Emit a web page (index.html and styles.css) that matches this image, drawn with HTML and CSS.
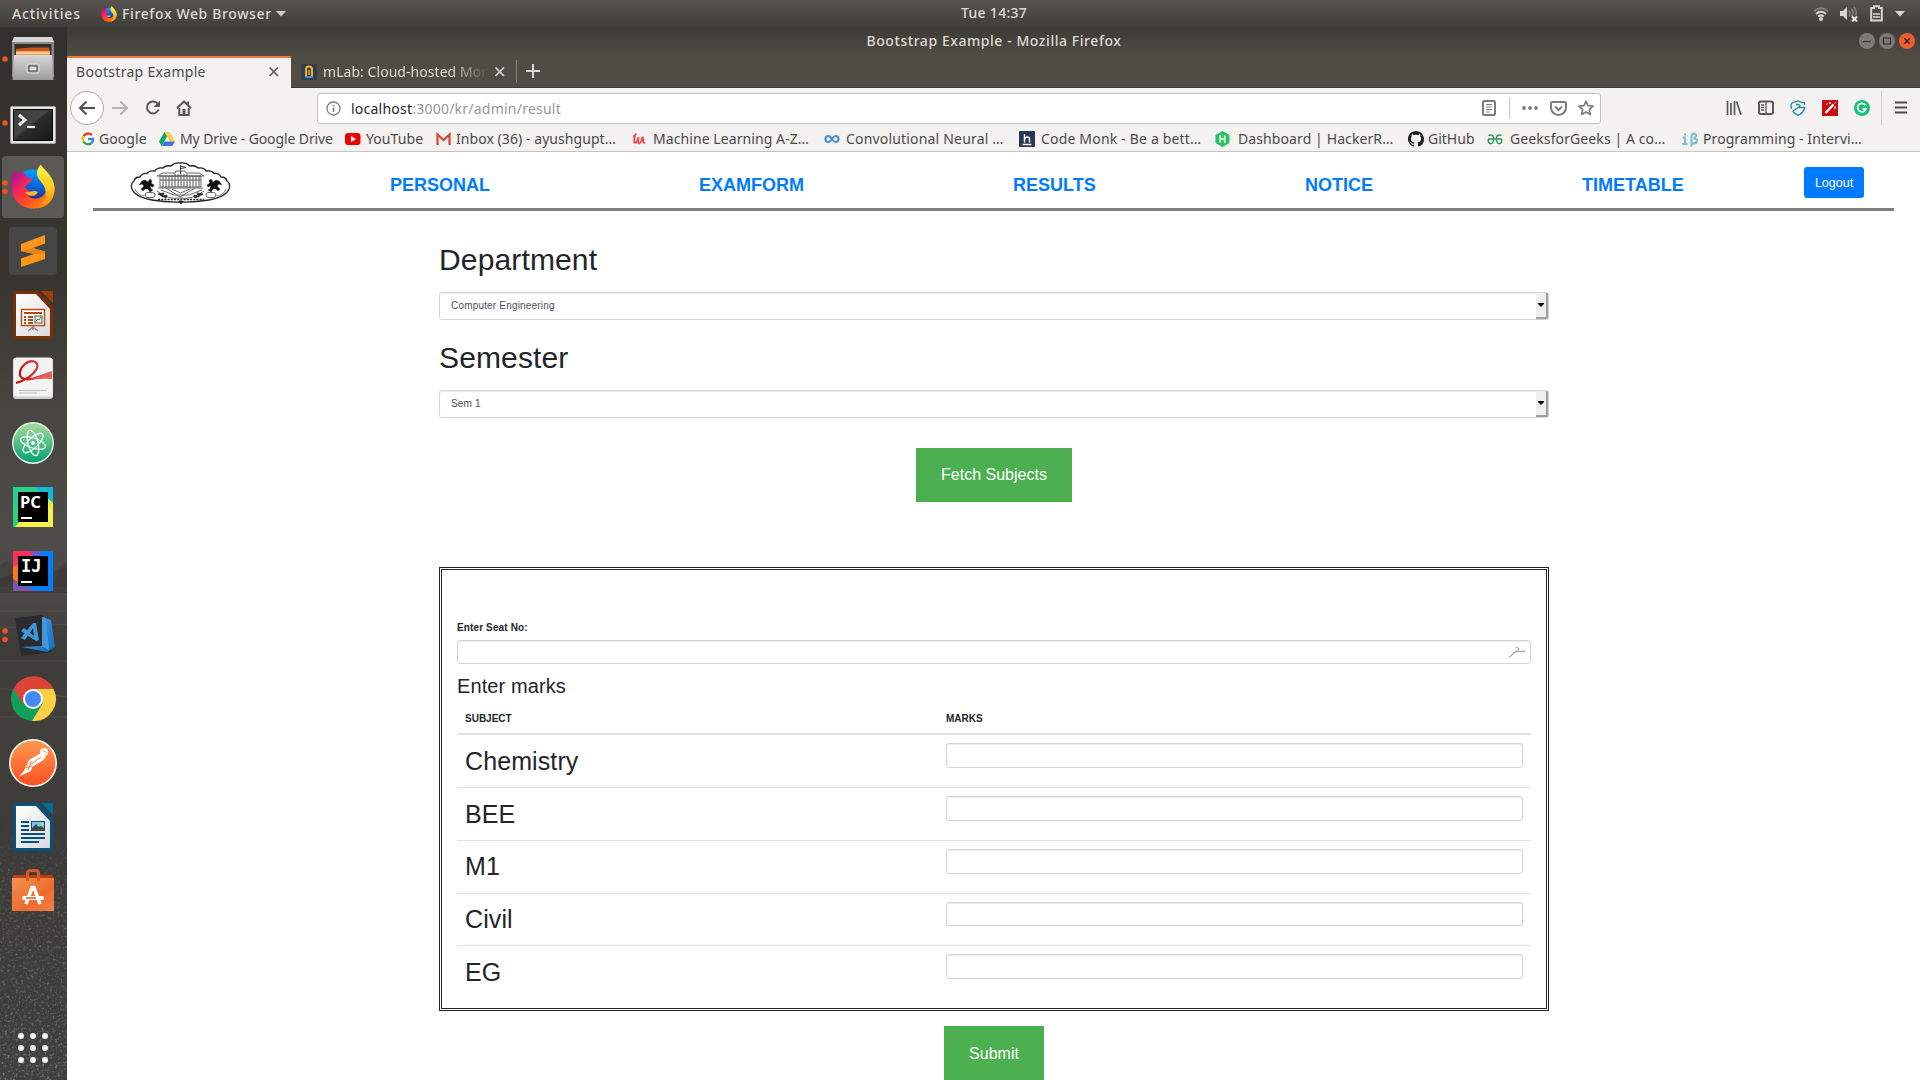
FILE: index.html
```html
<!DOCTYPE html>
<html lang="en">
<head>
<meta charset="utf-8">
<title>Bootstrap Example</title>
<link rel="stylesheet" href="styles.css">
</head>
<body>
<svg class="defs" width="0" height="0">
  <defs>
    <linearGradient id="ffRed" x1="0.1" y1="0.2" x2="0.9" y2="0.9"><stop offset="0" stop-color="#c3158e"/><stop offset=".3" stop-color="#ff2a4d"/><stop offset=".65" stop-color="#ff5a1c"/><stop offset="1" stop-color="#ff9a0c"/></linearGradient>
    <linearGradient id="ffYellow" x1="0" y1="0" x2="0" y2="1"><stop offset="0" stop-color="#fff44a"/><stop offset=".55" stop-color="#ffc51d"/><stop offset="1" stop-color="#ff8010"/></linearGradient>
    <linearGradient id="ffBlue" x1="0" y1="0" x2="0" y2="1"><stop offset="0" stop-color="#00a0ff"/><stop offset=".6" stop-color="#0558c9"/><stop offset="1" stop-color="#2b1a66"/></linearGradient>
    <symbol id="firefox" viewBox="0 0 46 46">
      <circle cx="23" cy="23" r="18" fill="url(#ffBlue)"/>
      <path d="M2 11 L5 6 L9 10 L13 8 L18 14 C20 14 22 14 23 15 L19 19 C16 21 14 22 16 25 C20 29 25 27 28 28 C26 33 20 33 17 31 C21 37 32 36 36 28 L45 22 C45 36 35 45 23 45 C9 45 0 33 1 22 C1 17 1 14 2 11 Z" fill="url(#ffRed)"/>
      <path d="M31 0 C34 6 44 11 45 23 C46 36 37 44 27 45 C35 40 38 32 35 24 C33 18 27 15 27 9 C27 5 29 2 31 0 Z" fill="url(#ffYellow)"/>
      <path d="M15 28 C19 30 23 25 28 28 C25 33 19 33 15 28 Z" fill="#ffb92e"/>
    </symbol>
    <linearGradient id="steel" x1="0" y1="0" x2="0" y2="1"><stop offset="0" stop-color="#d8d8d8"/><stop offset="1" stop-color="#9c9c9c"/></linearGradient>
    <linearGradient id="screen" x1="0" y1="0" x2="1" y2="1"><stop offset="0" stop-color="#3c3d3b"/><stop offset=".45" stop-color="#454644"/><stop offset=".5" stop-color="#2b2c2b"/><stop offset="1" stop-color="#171717"/></linearGradient>
    <linearGradient id="paper" x1="0" y1="0" x2="1" y2="1"><stop offset="0" stop-color="#fff"/><stop offset="1" stop-color="#d9d9d9"/></linearGradient>
    <linearGradient id="atomG" x1="0" y1="0" x2="0" y2="1"><stop offset="0" stop-color="#a5dc9b"/><stop offset="1" stop-color="#00a372"/></linearGradient>
    <linearGradient id="postG" x1="0" y1="0" x2="0" y2="1"><stop offset="0" stop-color="#ff9950"/><stop offset="1" stop-color="#ff4f23"/></linearGradient>
    <linearGradient id="bagG" x1="0" y1="0" x2="1" y2="1"><stop offset="0" stop-color="#ec9650"/><stop offset=".6" stop-color="#ef6a2d"/><stop offset="1" stop-color="#f0814b"/></linearGradient>
    <linearGradient id="codeG" x1="0" y1="0" x2="1" y2="1"><stop offset="0" stop-color="#54a9ec"/><stop offset="1" stop-color="#0f6cba"/></linearGradient>
    <linearGradient id="swirl" x1="0" y1="0" x2="1" y2="0"><stop offset="0" stop-color="#c80000"/><stop offset="1" stop-color="#e66a6a"/></linearGradient>
    <filter id="grain" x="0" y="0" width="100%" height="100%"><feTurbulence type="fractalNoise" baseFrequency=".38" numOctaves="2" seed="4"/><feColorMatrix values="0 0 0 0 .62  0 0 0 0 .62  0 0 0 0 .60  1.5 1.5 0 0 -1.55"/></filter>
    <linearGradient id="fadeIn" x1="0" y1="0" x2="0" y2="1"><stop offset="0" stop-color="#000"/><stop offset=".3" stop-color="#555"/><stop offset="1" stop-color="#999"/></linearGradient>
    <mask id="grainMask"><rect width="67" height="260" fill="url(#fadeIn)"/></mask>
  </defs>
</svg>

<header class="topbar">
  <span class="activities">Activities</span>
  <svg class="app-icon" width="16" height="20" viewBox="0 0 16 20"><use href="#firefox" x="0" y="2" width="16" height="16"/></svg>
  <span class="app-name">Firefox Web Browser</span>
  <svg class="app-arrow" width="10" height="6"><path d="M0 0H10L5 5.5Z" fill="#cfcdc8"/></svg>
  <span class="clock">Tue 14:37</span>
  <div class="tray">
    <svg width="16" height="16" viewBox="0 0 16 16" fill="none" stroke="#d8d6d2" stroke-width="2"><path d="M1 5.2Q8-.8 15 5.2" stroke="#85827b"/><path d="M3 8Q8 3.6 13 8"/><path d="M5.2 10.6Q8 8.2 10.800 10.600"/><circle cx="8" cy="13" r="1" /></svg>
    <svg width="18" height="16" viewBox="0 0 18 16"><path d="M0 5H3L7 1V14L3 10H0Z" fill="#d8d6d2"/><path d="M9 4.500Q11 7.500 9 10.500M11.500 2.500Q14.500 7 11.500 10.500M14 1Q17.500 5 15.500 9.500" fill="none" stroke="#85827b" stroke-width="1.500"/><path d="M12 10.500L17 15.500M17 10.500L12 15.500" stroke="#e8e6e2" stroke-width="2"/></svg>
    <svg width="13" height="17" viewBox="0 0 13 17"><path d="M1.200 3H4V1.200H9V3H11.800V15.600H1.200Z" fill="none" stroke="#d8d6d2" stroke-width="2"/><path d="M3 9H10M3 12H10" stroke="#d8d6d2" stroke-width="1.600"/></svg>
    <svg width="10" height="6"><path d="M0 0H10L5 5.500Z" fill="#d8d6d2"/></svg>
  </div>
</header>

<div class="desktop">
  <aside class="dock">
    <svg class="wallpaper" width="67" height="1053" viewBox="0 0 67 1053">
      <path d="M0 552Q12 546 22 548T45 553L55 544L67 540V566H0Z" fill="#35342f" opacity=".45"/>
      <path d="M0 540Q6 530 14 538Q22 546 20 560H0ZM60 540Q67 533 67 536V560H54Z" fill="#33322d" opacity=".3"/>
      <path d="M0 584H67M0 601L67 597M0 634H67M0 661L67 670M0 690H67" stroke="#5a5955" stroke-width="1" opacity=".5"/>
      <g transform="translate(0 793)" mask="url(#grainMask)"><rect width="67" height="260" filter="url(#grain)"/></g>
    </svg>
    <ul class="dock-list">
      <li><svg viewBox="0 0 66 64"><circle cx="5" cy="32" r="2.800" fill="#e95420"/><path d="M14 10H52L54 15V50H12V15Z" fill="#8b8b8b"/><path d="M14 10H52L54 15H12Z" fill="#d6d6d6"/><rect x="14.500" y="17" width="37" height="14" fill="#332d29"/><path d="M16 22L30 20.500H49L50 24H16Z" fill="#c8561e"/><path d="M16 24H50V28H16Z" fill="#eba252"/><path d="M16 26H50" stroke="#fff4df"/><path d="M14 28H52L53.500 53H12.500Z" fill="url(#steel)"/><rect x="27" y="37" width="12" height="9" rx="2" fill="#a6a6a6" stroke="#dcdcdc" stroke-width="1.200"/><rect x="29" y="39" width="8" height="5" fill="#ddd" stroke="#444"/></svg></li>
      <li><svg viewBox="0 0 66 64"><circle cx="5" cy="32" r="2.800" fill="#e95420"/><rect x="10.500" y="15.500" width="45" height="37" rx="1" fill="#e4e4e2" stroke="#a3a3a0"/><rect x="13.500" y="18.500" width="39" height="31" fill="url(#screen)" stroke="#080808"/><path d="M19 24L25 29L19 34" fill="none" stroke="#f4f4f4" stroke-width="3"/><path d="M27 36H35" stroke="#f4f4f4" stroke-width="2.200"/></svg></li>
      <li><svg viewBox="0 0 66 64"><rect x="2" y="1" width="62" height="62" rx="4" fill="#5b5955"/><circle cx="5" cy="28" r="2.800" fill="#e95420"/><circle cx="5" cy="36.500" r="2.800" fill="#e95420"/><use href="#firefox" x="10.500" y="9" width="45" height="46"/></svg></li>
      <li><svg viewBox="0 0 66 64"><rect x="9" y="8" width="48" height="48" rx="4" fill="#464646"/><path d="M21 25L45 16V24.500L33 29L45 32.500V40L21 48V39.500L34 35L21 32Z" fill="#ff9519"/><path d="M33 29L45 32.500V34.500L34 35L21 32Z" fill="#e5861a"/></svg></li>
      <li><svg viewBox="0 0 66 64"><path d="M15 8H38L53 24V53Q53 56 50 56H16Q13 56 13 53V10Q13 8 15 8Z" fill="#7c2d04"/><path d="M41 8H53V20Z" fill="#a33e03"/><path d="M16 11H36L50 26V53H16Z" fill="url(#paper)"/><path d="M33 43V47M28 48L33 44L38 48" stroke="#888" stroke-width="1.500" fill="none"/><rect x="21.500" y="26.500" width="23" height="16" fill="#fff" stroke="#b54b16" stroke-width="1.500"/><path d="M24 30H42M24 34H26M28 34H33M24 37H26M28 37H33M24 40H26M28 40H33" stroke="#b54b16" stroke-width="1.800"/><rect x="35" y="33" width="7" height="7" fill="#eee" stroke="#555"/><path d="M36 38L38 36L39 37L41 34" stroke="#1f9c3a" fill="none"/></svg></li>
      <li><svg viewBox="0 0 66 64"><rect x="13" y="11" width="40" height="41" rx="3" fill="#cfcfcf"/><rect x="13.500" y="10.500" width="39" height="39" rx="3" fill="#f3f3f3"/><path d="M16 36C24 34 34 28 37 21C39 14 31 12 25 17C20 21 18 28 22 31C28 35 41 29 52 25" fill="none" stroke="url(#swirl)" stroke-width="2.200"/><path d="M34 31Q44 29 52 25V32Q44 31 30 33Z" fill="#e46060"/><path d="M19 43.500H47M19 46H37" stroke="#bdbdbd" stroke-width="1"/></svg></li>
      <li><svg viewBox="0 0 66 64"><circle cx="33" cy="32" r="21" fill="#eee"/><circle cx="33" cy="32" r="19.600" fill="url(#atomG)"/><g fill="none" stroke="#f0faf4" stroke-width="1.300"><ellipse cx="33" cy="32" rx="13" ry="5" transform="rotate(18 33 32)"/><ellipse cx="33" cy="32" rx="13" ry="5" transform="rotate(76 33 32)"/><ellipse cx="33" cy="32" rx="13" ry="5" transform="rotate(136 33 32)"/></g><circle cx="33" cy="32" r="2" fill="#fff"/></svg></li>
      <li><svg viewBox="0 0 66 64"><rect x="13" y="12" width="40" height="40" fill="#29cf8b"/><path d="M35 12H53V30Z" fill="#11b9d8"/><path d="M53 28V52H15L44 20Z" fill="#f8f246"/><path d="M13 28V52L24 40Z" fill="#2bd27c"/><path d="M44 12L53 38L46 20Z" fill="#8be34f"/><rect x="18" y="17" width="30" height="30" fill="#000"/><text x="20" y="33" class="ide">PC</text><path d="M21 43H32" stroke="#fff" stroke-width="2"/></svg></li>
      <li><svg viewBox="0 0 66 64"><rect x="13" y="12" width="40" height="40" fill="#087cfa"/><path d="M13 12H32L40 24L13 32Z" fill="#fe315d"/><path d="M13 28L22 24V44L15 52H13Z" fill="#f97a12"/><path d="M13 40L20 44L36 52H13Z" fill="#7a58b0"/><path d="M30 12H42L35 20Z" fill="#6c5bc8"/><rect x="18" y="17" width="30" height="30" fill="#000"/><text x="21" y="33" class="ide mono">IJ</text><path d="M21 43H32" stroke="#fff" stroke-width="2"/></svg></li>
      <li><svg viewBox="0 0 66 64"><circle cx="5" cy="28" r="2.800" fill="#e95420"/><circle cx="5" cy="36.500" r="2.800" fill="#e95420"/><path d="M15 15L43 12L52 49L21 53Z" fill="#2b2b2e"/><path d="M42 14L51 17L55 44L47 49L22 44L42 43Z" fill="url(#codeG)"/><path d="M42 14L46 15L49 47L42 43Z" fill="#3f97dd"/><path d="M36 20L39 37L36 38L21 28L24 25L34 33L33 25L25 37L21 35L33 20Z" fill="#3a98e2"/></svg></li>
      <li><svg viewBox="0 0 66 64"><circle cx="33" cy="32" r="22" fill="#119f5a"/><path d="M13.500 22A22 22 0 0 1 53.500 22H33L23 36Z" fill="#dc4437"/><path d="M33 22H53.500A22 22 0 0 1 32 54L43 36Z" fill="#ffcf45"/><path d="M13.500 22L24 38L24 28Z" fill="#dc4437"/><circle cx="33" cy="32" r="10" fill="#fff"/><circle cx="33" cy="32" r="8" fill="#4588f4"/></svg></li>
      <li><svg viewBox="0 0 66 64"><circle cx="33" cy="32" r="24" fill="#fff"/><circle cx="33" cy="32" r="22.500" fill="url(#postG)"/><circle cx="44" cy="21" r="4" fill="#fff"/><path d="M41 22L29 29L24 40L19 45.500L31 40L32 36L42 30L46 26Z" fill="#fff"/><path d="M31 30L28 39M41 26L30 34M26 37L32 35" stroke="#ff7a3c" stroke-width="1"/><path d="M42 19L47 22" stroke="#ff7a3c" stroke-width=".8"/></svg></li>
      <li><svg viewBox="0 0 66 64"><path d="M15 8H38L53 24V53Q53 56 50 56H16Q13 56 13 53V10Q13 8 15 8Z" fill="#04507f"/><path d="M41 8H53V20Z" fill="#0369a3"/><path d="M16 11H36L50 26V53H16Z" fill="url(#paper)"/><path d="M21 27H29M21 31H29M21 35H29M21 39H45M21 43H45M21 47H39" stroke="#04507f" stroke-width="2"/><rect x="31.500" y="26.500" width="13" height="9" fill="#7fc4ef" stroke="#04507f"/><path d="M32 36V33L36 29L39 32L41 31L44 33V36Z" fill="#3b4a45"/><circle cx="42" cy="29" r="1.300" fill="#f5cf3b"/></svg></li>
      <li><svg viewBox="0 -2 66 64"><path d="M14 14H52L54 18H12Z" fill="#b8400f"/><path d="M12 17H54V50H12Z" fill="url(#bagG)"/><path d="M27.500 20V12Q27.500 9.500 31 9.500H35Q38.500 9.500 38.500 12V20" fill="none" stroke="#d9582a" stroke-width="3"/><path d="M26 43L32 26.500H34L40 43" fill="none" stroke="#fff" stroke-width="3.600"/><path d="M24 37H42" stroke="#fff" stroke-width="4" stroke-linecap="round"/><path d="M26 37H36" stroke="#e5622a" stroke-width="1.600"/></svg></li>
    </ul>
    <svg class="apps-grid" width="32" height="32" fill="#f2f1ef"><circle cx="4" cy="4" r="3"/><circle cx="16" cy="4" r="3"/><circle cx="28" cy="4" r="3"/><circle cx="4" cy="16" r="3"/><circle cx="16" cy="16" r="3"/><circle cx="28" cy="16" r="3"/><circle cx="4" cy="28" r="3"/><circle cx="16" cy="28" r="3"/><circle cx="28" cy="28" r="3"/></svg>
  </aside>

  <section class="window">
    <div class="titlebar">
      <span class="window-title">Bootstrap Example - Mozilla Firefox</span>
      <div class="controls">
        <svg width="16" height="16"><circle cx="8" cy="8" r="8" fill="#7d7b75"/><path d="M4 8.500H12" stroke="#35342f" stroke-width="1.200"/></svg>
        <svg width="16" height="16"><circle cx="8" cy="8" r="8" fill="#7d7b75"/><rect x="4.500" y="5" width="7" height="6" fill="none" stroke="#35342f" stroke-width="1.200"/></svg>
        <svg width="16" height="16"><circle cx="8" cy="8" r="8" fill="#ea5f33"/><path d="M5.200 5.200L10.800 10.800M10.800 5.200L5.200 10.800" stroke="#49211a" stroke-width="1.400"/></svg>
      </div>
    </div>

    <div class="tabs">
      <div class="tab active"><span>Bootstrap Example</span><svg width="12" height="12"><path d="M1.500 1.500L10 10M10 1.500L1.500 10" stroke="#5c5c5a" stroke-width="1.700"/></svg></div>
      <div class="tab">
        <svg width="16" height="16"><rect width="16" height="16" fill="#313f4c"/><path d="M5 12V5.500Q5 2.500 8 2.500Q11 2.500 11 5.500V12" fill="none" stroke="#f6b12c" stroke-width="2"/><path d="M8 6V11" stroke="#f6b12c" stroke-width="1.500"/><path d="M4 12H12V14H4Z" fill="#4a90c9"/></svg>
        <span class="faded">mLab: Cloud-hosted Mon</span>
        <svg width="12" height="12"><path d="M1.500 1.500L10 10M10 1.500L1.500 10" stroke="#dad8d3" stroke-width="1.700"/></svg>
      </div>
      <svg class="new-tab" width="14" height="14"><path d="M7 0V14M0 7H14" stroke="#dad8d3" stroke-width="2"/></svg>
    </div>

    <div class="toolbar">
      <div class="back"><svg width="18" height="16" fill="none" stroke="#4d4d4c" stroke-width="2"><path d="M17 8H2M8.500 1.500L2 8L8.500 14.500"/></svg></div>
      <svg class="forward" width="18" height="16" fill="none" stroke="#b5b4b2" stroke-width="2"><path d="M1 8H16M9.500 1.500L16 8L9.500 14.500"/></svg>
      <svg class="reload" width="16" height="16"><path d="M12.700 3.800A6 6 0 1 0 13.600 9.500" fill="none" stroke="#59595a" stroke-width="2"/><path d="M15 .5V7H8.500Z" fill="#59595a"/></svg>
      <svg class="home" width="16" height="16"><path d="M1 8.300L8 1.500L15 8.300" fill="none" stroke="#59595a" stroke-width="2"/><path d="M3.300 8V15H12.700V8" fill="none" stroke="#59595a" stroke-width="2"/><path d="M6.500 9H9.500V14H6.500Z" fill="#59595a"/><path d="M11 1.500H13V6H11Z" fill="#59595a"/></svg>
      <div class="urlbar">
        <svg width="15" height="15" fill="none" stroke="#7c7c7c" stroke-width="1.300"><circle cx="7.500" cy="7.500" r="6.500"/><path d="M7.500 6.500V11M7.500 3.700V5.200" stroke-width="1.600"/></svg>
        <span class="url">localhost<i>:3000/kr/admin/result</i></span>
        <svg class="reader" width="14" height="16" fill="none" stroke="#7c7c7c"><rect x="1" y="1" width="12" height="14" rx="1.500" stroke-width="2"/><path d="M4 4.500H10M4 7H10M4 9.500H10M4 12H7.500" stroke-width="1.200"/></svg>
        <span class="rule"></span>
        <svg class="more" width="16" height="4" fill="#7c7c7c"><circle cx="2" cy="2" r="1.900"/><circle cx="8" cy="2" r="1.900"/><circle cx="14" cy="2" r="1.900"/></svg>
        <svg class="pocket" width="17" height="15" fill="none" stroke="#7c7c7c" stroke-width="2"><path d="M1 2.500Q1 1 2.500 1H14.500Q16 1 16 2.500V6.500A7.500 7.500 0 0 1 1 6.500Z"/><path d="M5 5.500L8.500 9L12 5.500"/></svg>
        <svg width="16" height="16" fill="none" stroke="#7c7c7c" stroke-width="1.700" stroke-linejoin="round"><path d="M8 1.200L10 5.700L15 6.200L11.300 9.600L12.400 14.600L8 12L3.600 14.600L4.700 9.600L1 6.200L6 5.700Z"/></svg>
      </div>
      <div class="tools">
        <svg width="16" height="16" stroke="#59595a" stroke-width="1.700"><path d="M1.500 1V15M5 3V15M8.500 1V15M10.500 1.500L15 14.700"/></svg>
        <svg width="16" height="16" fill="none" stroke="#59595a"><rect x="1" y="1.500" width="14" height="12.500" rx="2" stroke-width="2"/><path d="M8 2V14M3 5H6M3 7.500H6M3 10H6" stroke-width="1.300"/></svg>
        <svg width="16" height="16" fill="none" stroke="#2f8fa8" stroke-width="1.400"><path d="M1.500 9C.5 4 1.500 2.800 3 2.500Q6 2 8 .8Q11 2.800 14.500 2.800V5M14.500 8Q13.500 13 8 15.300Q4.500 13.500 3 11.500"/><path d="M2.500 11.500L8 7.500H15.500M6 4.500H9Q11.500 6 8 7.500"/></svg>
        <svg width="16" height="16"><rect width="16" height="16" fill="#cd0a10"/><path d="M3.500 13L11.500 4.500" stroke="#fff" stroke-width="2.400"/><path d="M8 2V4M7 3H9M13 6.500V9M12 7.800H14M12.500 3.500L13.800 2.200M4.500 4.500L6 3.500" stroke="#fff" stroke-width="1"/></svg>
        <svg width="16" height="16"><circle cx="8" cy="8" r="8" fill="#15c378"/><path d="M11.500 5.300A4.300 4.300 0 1 0 12 8.800H8.600" fill="none" stroke="#fff" stroke-width="1.700"/></svg>
      </div>
      <svg class="menu" width="12" height="13" stroke="#4d4d4c" stroke-width="2"><path d="M0 1.500H12M0 6.500H12M0 11.500H12"/></svg>
    </div>

    <nav class="bookmarks">
      <a><svg width="16" height="16" viewBox="0 0 16 16"><circle cx="8" cy="8" r="8" fill="#fff"/><g fill="none" stroke-width="2.600"><path d="M12 4.200A5.300 5.300 0 0 0 3.600 5.200" stroke="#ea4335"/><path d="M3.500 5.300A5.300 5.300 0 0 0 3.500 10.700" stroke="#fbbc05"/><path d="M3.500 10.600A5.300 5.300 0 0 0 11.500 12" stroke="#34a853"/><path d="M11.400 12.100Q13.300 10.500 13.200 8H8" stroke="#4285f4"/></g></svg>Google</a>
      <a class="drive"><svg width="16" height="16" viewBox="0 0 16 16"><path d="M5.500 1H10.500L16 10.500H11Z" fill="#ffcf48"/><path d="M5.500 1L8 5.500L2.700 15L0 10.500Z" fill="#11a861"/><path d="M5.500 10.500H16L13.300 15H2.700Z" fill="#3777e3"/></svg>My Drive - Google Drive</a>
      <a><svg width="16" height="16" viewBox="0 0 16 16"><rect y="2" width="15.500" height="12" rx="3" fill="#f00000"/><path d="M6 5V11L11 8Z" fill="#fff"/></svg>YouTube</a>
      <a class="mail"><svg width="16" height="16" viewBox="0 0 16 16"><rect x="1" y="2.500" width="13" height="11.500" fill="#f1efee"/><path d="M1.500 14V3.500L7.500 9L13.500 3.500V14" fill="none" stroke="#d54b3d" stroke-width="2.300"/></svg>Inbox (36) - ayushgupt…</a>
      <a class="udemy"><svg width="16" height="16" viewBox="0 0 16 16"><path d="M1 5.500Q3.500 5 3.700 2.500Q1.500 9.500 2.500 11.500Q4.500 13 6.500 6.500" fill="none" stroke="#eb5252" stroke-width="2"/><path d="M6.500 6.500Q5.500 11.500 7 12.500Q8.500 12.500 10 7.500Q11.500 5 11.200 8Q10.500 12.500 13 11.500" fill="none" stroke="#eb5252" stroke-width="2"/></svg>Machine Learning A-Z…</a>
      <a class="loose"><svg width="16" height="16" viewBox="0 0 16 16"><path d="M8 8C6.500 10.500 5.700 11 4.500 11A3 3 0 0 1 4.500 5C7.500 5 8.500 11 11.500 11A3 3 0 0 0 11.500 5C10.300 5 9.500 5.500 8 8" fill="none" stroke="#4b8fc9" stroke-width="2.200"/></svg>Convolutional Neural …</a>
      <a class="loose"><svg width="16" height="16" viewBox="0 0 16 16"><rect width="16" height="16" rx="1" fill="#2c3454"/><path d="M5.500 3V11.500M5.500 7.500Q10.500 4.500 10.500 8V11.500M3.500 13.500H12.500" fill="none" stroke="#fff" stroke-width="1.500"/></svg>Code Monk - Be a bett…</a>
      <a class="wide"><svg width="16" height="16" viewBox="0 0 16 16"><path d="M7.500 0L14.500 4V12L7.500 16L.5 12V4Z" fill="#26c360"/><path d="M5.300 4V11.500M9.700 4.500V12M5.300 8H9.700" stroke="#fff" stroke-width="1.600"/></svg>Dashboard | HackerR…</a>
      <a class="github"><svg width="16" height="16" viewBox="0 0 16 16"><path fill="#1b1f23" d="M8 0C3.580 0 0 3.580 0 8c0 3.540 2.290 6.530 5.470 7.590.4.070.55-.17.55-.38 0-.19-.01-.82-.01-1.490-2.010.37-2.530-.49-2.690-.94-.09-.23-.48-.94-.82-1.130-.28-.15-.68-.52-.01-.53.63-.01 1.080.58 1.230.82.72 1.210 1.870.87 2.330.66.070-.52.280-.87.510-1.070-1.780-.2-3.640-.89-3.640-3.950 0-.87.310-1.590.82-2.150-.08-.2-.36-1.020.08-2.120 0 0 .67-.21 2.200.82.640-.18 1.320-.27 2-.27s1.360.09 2 .27c1.530-1.040 2.200-.82 2.200-.82.440 1.100.160 1.920.080 2.120.510.560.820 1.270.820 2.150 0 3.070-1.870 3.750-3.650 3.950.290.250.540.730.540 1.480 0 1.070-.01 1.930-.01 2.200 0 .210.150.460.550.380A8.010 8.010 0 0 0 16 8c0-4.420-3.580-8-8-8z"/></svg>GitHub</a>
      <a class="geeks"><svg width="16" height="16" viewBox="0 0 16 16"><path d="M1.500 4.500Q6.500 2.500 6.800 8Q6.500 13 3 12.500Q.5 11.500 1.500 8H14.500Q15.500 11.500 13 12.500Q9.500 13 9.200 8Q9.500 2.500 14.500 4.500" fill="none" stroke="#34975b" stroke-width="1.400"/></svg>GeeksforGeeks | A co…</a>
      <a><svg width="16" height="16" viewBox="0 0 16 16"><path d="M.5 6.500H3V12.500M.3 13H5.500M2 3.500H4" fill="none" stroke="#79bfd4" stroke-width="1.900"/><path d="M9.500 15.500V5Q9.500 2.500 12 2.500Q14.500 2.800 14 5Q13.500 7 11.500 7.200Q15 7.500 15 10Q14.500 13 9.500 12.500" fill="none" stroke="#79bfd4" stroke-width="2"/></svg>Programming - Intervi…</a>
    </nav>

    <main class="page">
      <header class="site-header">
        <svg class="logo" width="101" height="42" viewBox="0 0 101 42" fill="none" stroke="#222" stroke-width=".9">
          <path d="M2 27Q0 22 4 19Q5 15 10 15Q12 11 17 11.500Q19 8 25 9Q27 5 33 6Q36 3 41 4Q45 0 50.500 1Q56 0 60 4Q65 3 68 6Q74 5 76 9Q82 8 84 11.500Q89 11 91 15Q96 15 97 19Q101 22 99 27Q96 35 79 38Q64 40.500 50.500 40Q37 40.500 22 38Q5 35 2 27Z" stroke-width="1.300"/>
          <path d="M50.500 12V3M50.500 4L56 5.500L50.500 6.500" />
          <path d="M30 14H71V25H30ZM27 14L33 11H45L46 9H55L56 11H69L74 14Z" stroke="#555"/>
          <path d="M33 14V25M36 14V25M39 14V25M42 14V25M45 12V25M48 12V25M51 12V25M54 12V25M57 12V25M60 14V25M63 14V25M66 14V25M69 14V25" stroke="#444"/>
          <path d="M30 18H71M28 26H73M31 28L44 33H59L72 28M36 26L50 35L65 26M42 27L50.500 31L60 27M27 29Q38 38 50 36Q62 38 74 29" stroke="#555"/>
          <path d="M12 19L15 18L18 20L20 17L22 19L21 21L24 23L23 25L20 24L21 27L23 28L20 30L18 27L15 27L13 29L11 27L14 24L12 22L9 23ZM89 19L86 18L83 20L81 17L79 19L80 21L77 23L78 25L81 24L80 27L78 28L81 30L83 27L86 27L88 29L90 27L87 24L89 22L92 23Z" fill="#111" stroke-width=".4"/>
          <ellipse cx="20" cy="33" rx="5" ry="2.700" stroke="#444"/><ellipse cx="81" cy="33" rx="5" ry="2.700" stroke="#444"/>
          <path d="M28 32L34 31L32 35L37 33L36 36ZM73 32L67 31L69 35L64 33L65 36Z" fill="#333"/>
          <path d="M28 37.500H74" stroke-width="1.300" stroke-dasharray="2 1.200"/><path d="M49 39H52.500L51 42Z" fill="#111"/>
          <path d="M5 27Q8 34 14 34M96 27Q93 34 87 34" stroke="#666"/>
        </svg>
        <a>PERSONAL</a><a>EXAMFORM</a><a>RESULTS</a><a>NOTICE</a><a>TIMETABLE</a>
        <button class="logout">Logout</button>
      </header>

      <div class="content">
        <h2>Department</h2>
        <div class="select"><span>Computer Engineering</span><b class="drop"><svg width="6" height="4"><path d="M0 0H6V1L3 4L0 1Z"/></svg></b></div>
        <h2>Semester</h2>
        <div class="select"><span>Sem 1</span><b class="drop"><svg width="6" height="4"><path d="M0 0H6V1L3 4L0 1Z"/></svg></b></div>
        <button class="green fetch">Fetch Subjects</button>

        <form class="marks">
          <label>Enter Seat No:</label>
          <div class="input seat"><svg width="18" height="12" fill="none" stroke="#b4b4b4" stroke-width="1.300"><path d="M1 11.500L6 7Q9 4 11 5.500M4 7.500Q9 4.500 17.500 5.500M7.500 1L11 2.500L9.500 5.500"/></svg></div>
          <h4>Enter marks</h4>
          <div class="row head"><span>SUBJECT</span><span>MARKS</span></div>
          <div class="row first"><span class="name">Chemistry</span><div class="input"></div></div>
          <div class="row"><span class="name">BEE</span><div class="input"></div></div>
          <div class="row"><span class="name">M1</span><div class="input"></div></div>
          <div class="row"><span class="name">Civil</span><div class="input"></div></div>
          <div class="row"><span class="name">EG</span><div class="input"></div></div>
        </form>
        <button class="green submit">Submit</button>
      </div>
    </main>
  </section>
</div>
</body>
</html>
```
FILE: styles.css
```css
* { box-sizing: border-box; }
body {
  margin: 0;
  width: 1920px;
  height: 1080px;
  overflow: hidden;
  font-family: "Noto Sans", sans-serif;
  font-size: 14px;
}
svg { display: block; flex: none; }
.defs { position: absolute; }
button { border: 0; padding: 0; font-family: inherit; }

/* desktop bar */
.topbar {
  height: 27px;
  display: grid;
  grid-template-columns: 89px 21px 155px 684px 1fr auto;
  align-items: center;
  padding: 0 15px 0 12px;
  background: linear-gradient(#57544d, #3f3e3a);
  color: #dfdbd2;
  font-weight: 500;
  line-height: 27px;
  white-space: nowrap;
}
.activities { letter-spacing: .85px; }
.app-name { letter-spacing: .63px; }
.app-arrow { margin-left: -1px; }
.clock { letter-spacing: .3px; margin-top: -2px; }
.tray { display: flex; align-items: center; }
.tray svg:nth-child(1) { margin-right: 11px; }
.tray svg:nth-child(2) { margin-right: 12px; }
.tray svg:nth-child(3) { margin-right: 12px; }

.desktop { display: flex; height: 1053px; }

/* launcher */
.dock {
  position: relative;
  width: 67px;
  flex: none;
  display: flex;
  flex-direction: column;
  align-items: center;
  background: linear-gradient(#33312d 0, #373530 250px, #474641 390px, #4e4c48 500px, #4b4a46 560px, #3d3c39 620px, #41403d 700px, #3c3b39 800px, #40403d 1053px);
}
.wallpaper { position: absolute; inset: 0; }
.dock-list { position: relative; list-style: none; margin: 0; padding: 0 1px 0 0; width: 67px; height: 1005px; }
.dock-list li { width: 66px; height: 64px; }
.ide { font: 700 16.5px "Noto Sans", sans-serif; fill: #fff; }
.ide.mono { font: 700 17px "DejaVu Sans Mono", monospace; }
.apps-grid { position: relative; margin-right: 1px; }

/* browser chrome */
.window { flex: 1; display: flex; flex-direction: column; min-width: 0; }
.titlebar {
  height: 29px;
  display: flex;
  background: linear-gradient(#3c3b37, #504c45);
  color: #dfdbd2;
  font-weight: 500;
}
.window-title { width: 1792px; padding-left: 62px; text-align: center; line-height: 27px; letter-spacing: .56px; }
.controls { display: flex; gap: 4px; padding-top: 6px; }
.tabs { height: 32px; display: flex; align-items: stretch; background: #504c45; border-bottom: 1px solid #393834; color: #dfdbd2; }
.tab { display: flex; align-items: center; padding-left: 10px; width: 226px; border-right: 1px solid #838079; margin: 4px 0; }
.tab.active { width: 224px; margin: 0 0 -1px; padding: 0 11px 3px 9px; border: 0; border-top: 2px solid #f07746; background: #f3f2f1; color: #4c4c4c; justify-content: space-between; letter-spacing: .3px; }
.faded {
  width: 165px; margin: 0 6px 0 6px; overflow: hidden; white-space: nowrap; letter-spacing: .05px;
  -webkit-mask-image: linear-gradient(90deg, #000 128px, transparent 165px);
  mask-image: linear-gradient(90deg, #000 128px, transparent 165px);
}
.new-tab { margin: 8px 0 0 9px; }

.toolbar { height: 39px; display: flex; align-items: center; background: #f3f2f1; padding-left: 3px; }
.back { width: 34px; height: 34px; margin-top: 1px; border: 1px solid #aaa9a7; border-radius: 50%; background: #fff; display: flex; align-items: center; justify-content: center; flex: none; }
.forward { margin-left: 7px; }
.reload { margin-left: 16px; }
.home { margin-left: 15px; }
.urlbar { width: 1284px; height: 31px; flex: none; margin: 1px 0 0 125px; border: 1px solid #c5c4c2; border-radius: 3px; background: #fff; display: flex; align-items: center; padding: 0 6px 0 8px; }
.url { flex: 1; margin-left: 10px; color: #1f1f1f; letter-spacing: .23px; }
.url i { font-style: normal; color: #979797; }
.rule { width: 1px; height: 22px; background: #c9c9c9; margin: 0 12px 0 13px; }
.pocket { margin: 0 11px 0 12px; }
.tools { display: flex; gap: 16px; margin-left: 125px; width: 156px; height: 34px; align-items: center; border-right: 1px solid #d5d4d2; flex: none; }
.menu { margin-left: 13px; }

.bookmarks {
  height: 25px;
  display: grid;
  grid-template-columns: 79px 186px 91px 196px 192px 195px 196px 193px 79px 195px 1fr;
  align-items: center;
  padding-left: 13px;
  background: #f3f2f1;
  border-bottom: 1px solid #c4c3c1;
  color: #4a4a4a;
  white-space: nowrap;
}
.bookmarks a { display: flex; align-items: center; gap: 5px; letter-spacing: .08px; line-height: 22px; }
.bookmarks a:nth-child(1) { gap: 3px; }
.bookmarks .drive { letter-spacing: -.11px; }
.bookmarks .mail { gap: 4px; letter-spacing: .06px; }
.bookmarks .udemy { letter-spacing: .08px; }
.bookmarks .loose { gap: 6px; letter-spacing: .18px; }
.bookmarks .github { gap: 4px; letter-spacing: 0; }
.bookmarks .wide, .bookmarks .geeks { gap: 7px; letter-spacing: .1px; }

/* page */
.page { flex: 1; background: #fff; color: #212529; font-family: "Liberation Sans", Arial, sans-serif; }
.site-header {
  height: 59px;
  margin: 0 26px;
  border-bottom: 3px solid #808080;
  padding-left: 37px;
  display: grid;
  grid-template-columns: 260px 309px 314px 292px 277px 222px 60px;
  align-items: center;
}
.site-header a { color: #007bff; font-size: 18px; font-weight: 700; line-height: 20px; padding-top: 10px; }
.logo { margin-top: 6px; }
.logout { width: 60px; height: 31px; margin-top: 5px; border-radius: 3px; background: #007bff; color: #fff; font-size: 12.500px; }

.content { width: 1110px; margin: 31px 0 0 372px; }
h2 { margin: 0 0 14px; font-size: 30px; line-height: 36px; font-weight: 400; letter-spacing: .14px; }
.select {
  height: 28px;
  margin-bottom: 20px;
  border: 1px solid #ced4da;
  border-radius: 3px;
  box-shadow: inset 0 1px 1px rgba(0, 0, 0, .075);
  color: #495057;
  font-size: 10px;
  display: flex;
  align-items: center;
  justify-content: space-between;
  padding-left: 11px;
  letter-spacing: .18px;
}
.select span { padding-bottom: 2px; }
.drop { width: 12px; height: 26px; background: #f0efee; border-right: 2px solid #a0a0a0; border-bottom: 2px solid #a0a0a0; display: flex; align-items: center; justify-content: center; }
.green { display: block; margin: 0 auto; height: 54px; background: #4caf50; color: #fff; font-size: 16px; }
.fetch { width: 156px; margin-top: 30px; }
.submit { width: 100px; margin-top: 15px; padding-top: 1px; }

.marks { height: 444px; margin-top: 65px; border: 3px double #212529; padding: 50px 15px 0; }
.marks label { display: block; height: 15px; margin-bottom: 5px; font-size: 10px; line-height: 15px; font-weight: 700; letter-spacing: .13px; }
.input { border: 1px solid #ced4da; border-radius: 3px; box-shadow: inset 0 1px 1px rgba(0, 0, 0, .075); height: 24.8px; }
.seat { height: 24px; display: flex; justify-content: flex-end; padding: 5px 4px 0 0; }
h4 { margin: 10px 0 4px; font-size: 20px; line-height: 24px; font-weight: 400; letter-spacing: .1px; }
.row { display: grid; grid-template-columns: 481px 1fr; height: 52.8px; border-top: 1px solid #dee2e6; padding-top: 8px; }
.row > * { margin: 0 8px; }
.row.head { height: 33px; border-top: 0; border-bottom: 2px solid #dee2e6; font-size: 10px; font-weight: 700; line-height: 18px; }
.row.first { height: 52px; border-top: 0; }
.name { font-size: 25px; line-height: 30px; padding-top: 2.500px; letter-spacing: .1px; }
.row.first .name { padding-top: 3px; }
```
